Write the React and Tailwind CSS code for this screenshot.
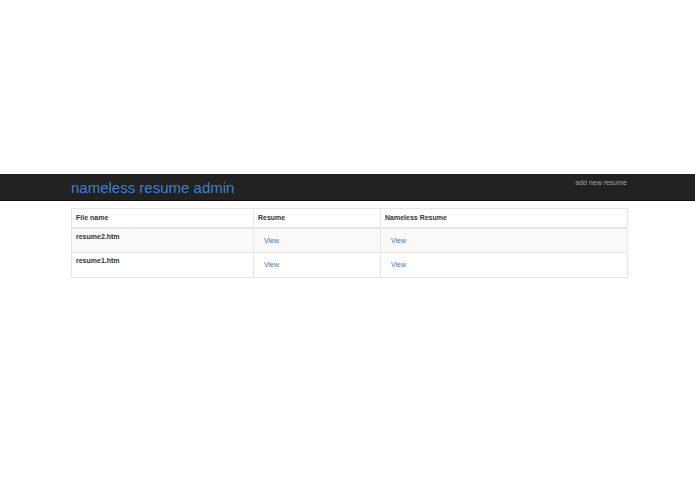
export default function App() {
  const rows = ["resume2.htm", "resume1.htm"];
  return (
    <div className="w-[695px] h-[494px] bg-white" style={{ fontFamily: '"Liberation Sans", Arial, sans-serif' }}>
      <div className="h-[174px]" />
      <div className="h-[27px] bg-[#222222] border-b border-[#101010]">
        <div className="ml-[71px] w-[557px] flex justify-between">
          <div className="text-[15px] leading-[27px] text-[#3d80c7]">nameless resume admin</div>
          <div className="text-[7px] leading-none pt-[5px] pr-[1px] text-[#a0a0a0]">add new resume</div>
        </div>
      </div>
      <div className="ml-[71px] w-[557px] mt-[7px]">
        <table className="w-full border-collapse border border-[#e2e2e2] text-[7px] text-[#333]">
          <thead>
            <tr className="h-[19px]">
              <th className="w-[182px] text-left font-bold px-[4px] border border-[#e6e6e6] border-b-2">File name</th>
              <th className="w-[127px] text-left font-bold px-[4px] border border-[#e6e6e6] border-b-2">Resume</th>
              <th className="text-left font-bold px-[4px] border border-[#e6e6e6] border-b-2">Nameless Resume</th>
            </tr>
          </thead>
          <tbody>
            {rows.map((r, i) => (
              <tr key={r} className={i === 0 ? "bg-[#f9f9f9]" : "bg-white"}>
                <td className="align-top font-bold px-[4px] pt-[3px] h-[25px] border border-[#e6e6e6]">{r}</td>
                <td className="align-top px-[4px] pt-[7px] border border-[#e6e6e6]">
                  <span className="pl-[6px] text-[#3f74b8]">View</span>
                </td>
                <td className="align-top px-[4px] pt-[7px] border border-[#e6e6e6]">
                  <span className="pl-[6px] text-[#3f74b8]">View</span>
                </td>
              </tr>
            ))}
          </tbody>
        </table>
      </div>
    </div>
  );
}
